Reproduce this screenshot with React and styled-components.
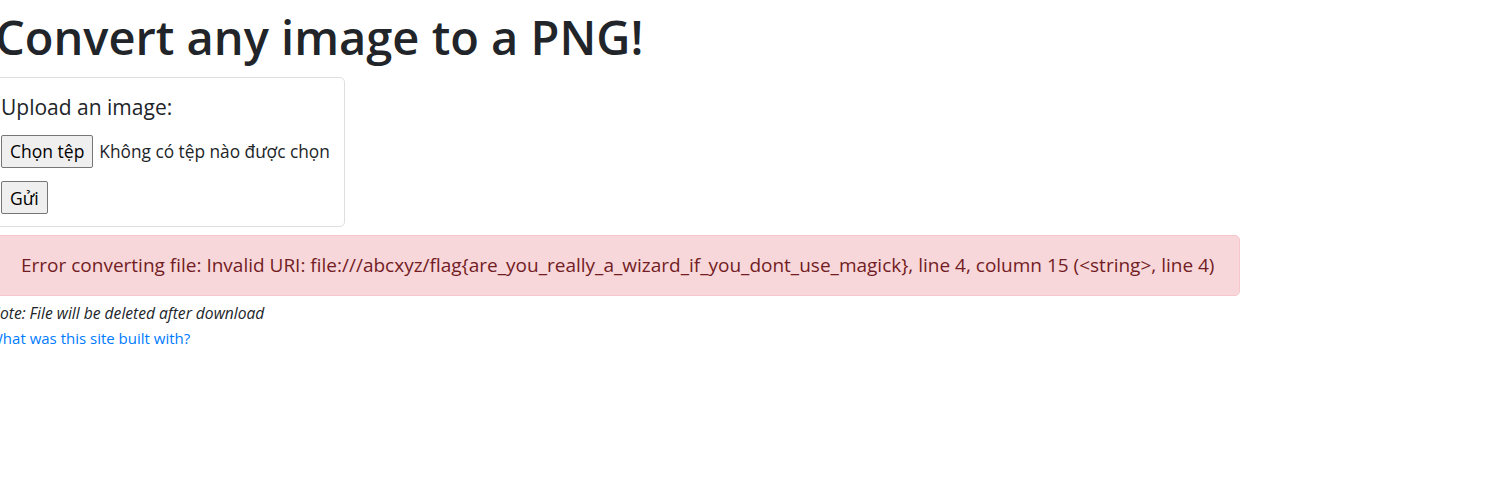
import React from 'react';
import styled, { createGlobalStyle } from 'styled-components';

const GlobalStyle = createGlobalStyle`
    html, body {
        margin: 0;
        padding: 0;
        background: #fff;
        overflow: hidden;
    }
    body {
        font-family: "Open Sans", "Noto Sans", sans-serif;
        color: #212529;
        font-size: 20px;
        line-height: 1.5;
    }
`;

const Page = styled.div`
    margin-left: -14px;
    padding-top: 4px;
`;

const Title = styled.h1`
    margin: 0 0 7px 9px;
    font-size: 47px;
    font-weight: 600;
    line-height: 66px;
    color: #212529;
`;

const Card = styled.form`
    display: inline-block;
    border: 1px solid #dfdfdf;
    border-radius: 5px;
    padding: 14px 14px 12px 14px;
`;

const Label = styled.p`
    margin: 0 0 13px;
    font-size: 21px;
    line-height: 30px;
`;

const Row = styled.div`
    display: flex;
    align-items: center;
    gap: 6px;
    margin-bottom: 13px;

    &:last-child{
        margin-bottom: 0;
    }
`;

const Button = styled.label`
    display: inline-flex;
    align-items: center;
    height: 33px;
    box-sizing: border-box;
    padding: 0 8px;
    background: #efefef;
    border: 1px solid #767676;
    border-radius: 2px;
    font-family: inherit;
    font-size: 17.5px;
    color: #000;
    cursor: pointer;

    input{
        display: none;
    }
`;

const FileName = styled.span`
    font-size: 17.3px;
    color: #212529;
`;

const Alert = styled.div`
    box-sizing: border-box;
    width: 1245px;
    margin: 8px 0 0 9px;
    padding: 15px 25px;
    background: #f8d7da;
    border: 1px solid #f5c6cb;
    border-radius: 5px;
    color: #721c24;
    font-size: 19px;
    line-height: 29px;
    white-space: nowrap;
`;

const Footer = styled.div`
    margin-top: 6px;
    margin-left: 3px;
    line-height: 24px;
`;

const Note = styled.em`
    display: block;
    font-size: 15.6px;
    line-height: 23px;
`;

const Link = styled.a`
    color: #007bff;
    font-size: 15px;
    text-decoration: none;
`;

export default function App() {
    return (
        <>
            <GlobalStyle />
            <Page>
                <Title>Convert any image to a PNG!</Title>
                <Card>
                    <Label>Upload an image:</Label>
                    <Row>
                        <Button>
                            Chọn tệp
                            <input type="file" />
                        </Button>
                        <FileName>Không có tệp nào được chọn</FileName>
                    </Row>
                    <Row>
                        <Button as="button" type="button">Gửi</Button>
                    </Row>
                </Card>
                <Alert>
                    Error converting file: Invalid URI: file:///abcxyz/flag{'{'}are_you_really_a_wizard_if_you_dont_use_magick{'}'}, line 4, column 15 (&lt;string&gt;, line 4)
                </Alert>
                <Footer>
                    <Note>Note: File will be deleted after download</Note>
                    <Link href="#">What was this site built with?</Link>
                </Footer>
            </Page>
        </>
    );
}
